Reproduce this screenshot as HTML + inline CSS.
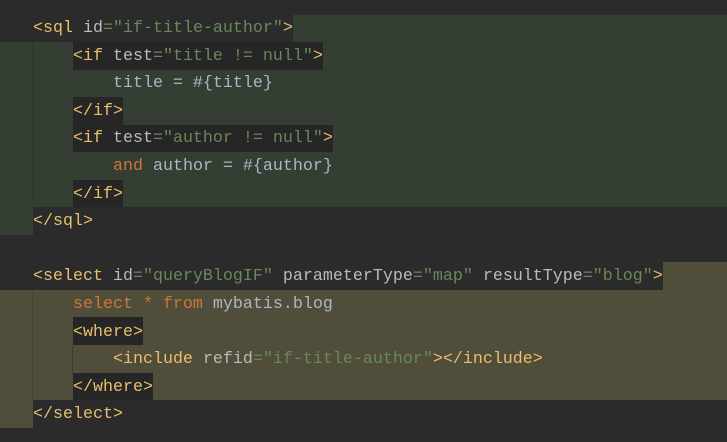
<!DOCTYPE html>
<html><head><style>
html,body{margin:0;padding:0;background:#2b2b2b;width:727px;height:442px;overflow:hidden;position:relative}
.b{position:absolute}
.g{background:#343e32}
.o{background:#504d3b}
.d{background:#2b2b2b}
.l{position:absolute;left:33px;height:27.6px;line-height:27.6px;font-family:"Liberation Mono","DejaVu Sans Mono",monospace;font-size:16.67px;white-space:pre;color:#a9b7c6}
.t{color:#e8bf6a}.a{color:#bababa}.s{color:#6a8759}.k{color:#cc7832}
.vg{position:absolute;width:1px}
</style></head><body>
<!-- sql block -->
<div class="b g" style="left:293px;top:15px;width:434px;height:27px"></div>
<div class="b g" style="left:0;top:42px;width:727px;height:165px"></div>
<div class="b g" style="left:0;top:207px;width:33px;height:28px"></div>
<div class="b d" style="left:73px;top:42px;width:250px;height:28px;background:#262626"></div>
<div class="b d" style="left:73px;top:97px;width:50px;height:28px;background:#262626"></div>
<div class="b d" style="left:73px;top:125px;width:260px;height:27px;background:#262626"></div>
<div class="b d" style="left:73px;top:180px;width:50px;height:27px;background:#262626"></div>
<div class="vg" style="left:32px;top:42px;height:165px;background:#2f382d"></div>
<!-- select block -->
<div class="b o" style="left:663px;top:262px;width:64px;height:28px"></div>
<div class="b o" style="left:0;top:290px;width:727px;height:110px"></div>
<div class="b o" style="left:0;top:400px;width:33px;height:28px"></div>
<div class="b" style="left:73px;top:317px;width:70px;height:28px;background:#262626"></div>
<div class="b" style="left:73px;top:373px;width:80px;height:27px;background:#262626"></div>
<div class="vg" style="left:32px;top:290px;height:110px;background:#46443a"></div>
<div class="vg" style="left:72px;top:345px;height:28px;background:#3e3c30"></div>

<div class="l" style="top:15px"><span class="t">&lt;sql </span><span class="a">id</span><span class="s">="if-title-author"</span><span class="t">&gt;</span></div>
<div class="l" style="top:42.6px">    <span class="t">&lt;if </span><span class="a">test</span><span class="s">="title != null"</span><span class="t">&gt;</span></div>
<div class="l" style="top:70.2px">        title = #{title}</div>
<div class="l" style="top:97.8px">    <span class="t">&lt;/if&gt;</span></div>
<div class="l" style="top:125.4px">    <span class="t">&lt;if </span><span class="a">test</span><span class="s">="author != null"</span><span class="t">&gt;</span></div>
<div class="l" style="top:153px">        <span class="k">and</span> author = #{author}</div>
<div class="l" style="top:180.6px">    <span class="t">&lt;/if&gt;</span></div>
<div class="l" style="top:208.2px"><span class="t">&lt;/sql&gt;</span></div>
<div class="l" style="top:263.4px"><span class="t">&lt;select </span><span class="a">id</span><span class="s">="queryBlogIF" </span><span class="a">parameterType</span><span class="s">="map" </span><span class="a">resultType</span><span class="s">="blog"</span><span class="t">&gt;</span></div>
<div class="l" style="top:291px">    <span class="k">select * from</span> mybatis.blog</div>
<div class="l" style="top:318.6px">    <span class="t">&lt;where&gt;</span></div>
<div class="l" style="top:346.2px">        <span class="t">&lt;include </span><span class="a">refid</span><span class="s">="if-title-author"</span><span class="t">&gt;&lt;/include&gt;</span></div>
<div class="l" style="top:373.8px">    <span class="t">&lt;/where&gt;</span></div>
<div class="l" style="top:401.4px"><span class="t">&lt;/select&gt;</span></div>
</body></html>
